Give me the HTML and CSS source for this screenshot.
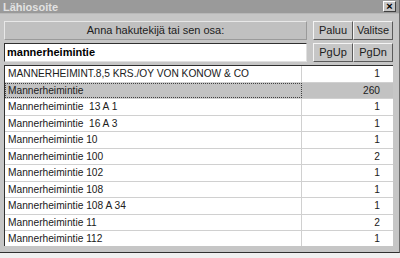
FILE: index.html
```html
<!DOCTYPE html>
<html>
<head>
<meta charset="utf-8">
<link rel="stylesheet" href="styles.css">
</head>
<body>
<div class="window">
  <div class="titlebar">
    <span class="title">Lähiosoite</span>
    <span class="close">×</span>
  </div>
  <div class="content">
    <div class="top">
      <div class="prompt">Anna hakutekijä tai sen osa:</div>
      <div class="btns">
        <div class="btn">Paluu</div>
        <div class="btn">Valitse</div>
      </div>
      <div class="input">mannerheimintie</div>
      <div class="btns">
        <div class="btn">PgUp</div>
        <div class="btn">PgDn</div>
      </div>
    </div>
    <div class="list">
      <div class="row"><div class="name">MANNERHEIMINT.8,5 KRS./OY VON KONOW &amp; CO</div><div class="count">1</div></div>
      <div class="row sel"><div class="name focus">Mannerheimintie</div><div class="count">260</div></div>
      <div class="row"><div class="name">Mannerheimintie&nbsp; 13 A 1</div><div class="count">1</div></div>
      <div class="row"><div class="name">Mannerheimintie&nbsp; 16 A 3</div><div class="count">1</div></div>
      <div class="row"><div class="name">Mannerheimintie 10</div><div class="count">1</div></div>
      <div class="row"><div class="name">Mannerheimintie 100</div><div class="count">2</div></div>
      <div class="row"><div class="name">Mannerheimintie 102</div><div class="count">1</div></div>
      <div class="row"><div class="name">Mannerheimintie 108</div><div class="count">1</div></div>
      <div class="row"><div class="name">Mannerheimintie 108 A 34</div><div class="count">1</div></div>
      <div class="row"><div class="name">Mannerheimintie 11</div><div class="count">2</div></div>
      <div class="row"><div class="name">Mannerheimintie 112</div><div class="count">1</div></div>
    </div>
  </div>
</div>
<div class="under"></div>
</body>
</html>
```

FILE: styles.css
```css
html, body {
  margin: 0;
  padding: 0;
}
body {
  width: 400px;
  height: 258px;
  overflow: hidden;
  background: #d8d8d8;
  font-family: "Liberation Sans", Arial, sans-serif;
  font-size: 11px;
  color: #000;
}
.window {
  height: 253px;
  box-sizing: border-box;
  background: #c6c6c6;
  border-right: 1px solid #6a6a6a;
  border-bottom: 1px solid #303030;
  display: flex;
  flex-direction: column;
}
.titlebar {
  height: 13px;
  background: #9a9a9a;
  display: flex;
  align-items: center;
  justify-content: space-between;
  padding: 0 3px 0 3px;
  border-bottom: 1px solid #b8b8b8;
}
.title {
  color: #e2e2e2;
  font-weight: bold;
  font-size: 11px;
}
.close {
  width: 11px;
  height: 9px;
  line-height: 8px;
  text-align: center;
  background: #c6c6c6;
  border-top: 1px solid #fff;
  border-left: 1px solid #fff;
  border-right: 1px solid #404040;
  border-bottom: 1px solid #404040;
  font-size: 11px;
  font-weight: bold;
  color: #000;
}
.content {
  padding: 7px 6px 0 4px;
  display: flex;
  flex-direction: column;
  gap: 3px;
  flex: 1;
  min-height: 0;
}
.top {
  display: grid;
  grid-template-columns: 303px 1fr;
  column-gap: 6px;
  row-gap: 3px;
}
.prompt {
  height: 19px;
  box-sizing: border-box;
  background: #c0c0c0;
  border-top: 1px solid #e8e8e8;
  border-left: 1px solid #e8e8e8;
  border-right: 1px solid #9a9a9a;
  border-bottom: 1px solid #9a9a9a;
  text-align: center;
  line-height: 17px;
  color: #202020;
}
.btns {
  display: flex;
}
.btn {
  flex: 1;
  height: 19px;
  box-sizing: border-box;
  background: #c6c6c6;
  border-top: 1px solid #f4f4f4;
  border-left: 1px solid #f4f4f4;
  border-right: 1px solid #5a5a5a;
  border-bottom: 1px solid #5a5a5a;
  text-align: center;
  line-height: 17px;
  color: #202020;
}
.input {
  height: 19px;
  box-sizing: border-box;
  background: #fff;
  border-top: 1px solid #303030;
  border-left: 1px solid #303030;
  border-right: 1px solid #e0e0e0;
  border-bottom: 1px solid #e0e0e0;
  font-weight: bold;
  padding-left: 2px;
  line-height: 17px;
}
.list {
  flex: 1;
  overflow: hidden;
  background: #fff;
  border-top: 1px solid #303030;
  border-left: 1px solid #303030;
  width: 388px;
  margin-bottom: 6px;
  font-size: 10.2px;
}
.row {
  display: flex;
  height: 16.5px;
  box-sizing: border-box;
  border-bottom: 1px solid #d0d0d0;
  line-height: 15px;
}
.name {
  width: 297px;
  box-sizing: border-box;
  border-right: 1px solid #d0d0d0;
  padding-left: 3px;
  white-space: nowrap;
  overflow: hidden;
  color: #202020;
}
.count {
  flex: 1;
  text-align: right;
  padding-right: 13px;
  color: #202020;
}
.sel {
  background: #c2c2c2;
}
.focus {
  border: 1px dotted #404040;
  line-height: 13px;
  padding-left: 2px;
}
.under {
  height: 5px;
  background: #f0f0f0;
}
```
